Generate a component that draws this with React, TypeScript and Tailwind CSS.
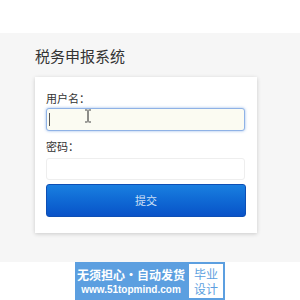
import React from 'react';

const font = { fontFamily: '"Noto Sans CJK SC", "Liberation Sans", sans-serif' };

export default function App() {
  return (
    <div className="w-[300px] h-[300px] bg-white overflow-hidden" style={font}>
      <div className="h-[33px] bg-white" />
      <div className="h-[229px] bg-[#f6f6f6] pl-[35px] pt-[12px]">
        <h1 className="text-[15px] leading-[22px] text-[#333]">税务申报系统</h1>
        <div className="relative mt-[10px] w-[222px] bg-white shadow-[0_1px_4px_rgba(0,0,0,0.18)] px-[11px] pt-[14px] pb-[16px]">
          <label className="block text-[11px] leading-[14px] text-[#333]">用户名：</label>
          <div className="relative mt-[3px] h-[23px] w-[199px] rounded-[3px] border border-[#8fb2e6] bg-[#fbfbf2] shadow-[0_0_3px_rgba(82,140,220,0.6)]">
            <span className="absolute left-[2px] top-[4px] h-[13px] w-px bg-[#555]" />
            <svg className="absolute left-[37px] top-[0px]" width="8" height="14" viewBox="0 0 8 14">
              <path d="M1 1h2.5M4.5 1H7M4 1.5v11M1 13h2.5M4.5 13H7" stroke="#444" strokeWidth="1.2" fill="none" />
            </svg>
          </div>
          <label className="block mt-[8px] text-[11px] leading-[14px] text-[#333]">密码：</label>
          <div className="mt-[5px] h-[22px] w-[199px] rounded-[3px] border border-[#eeeeee] bg-white" />
          <button className="mt-[4px] h-[33px] w-[200px] rounded-[3px] bg-gradient-to-b from-[#1a7fe0] to-[#0a52c8] border border-[#0d4fb5] text-[11px] text-[#cfe1f7]">
            提交
          </button>
        </div>
      </div>
      <div className="flex justify-center">
        <div className="flex h-[38px] w-[150px]">
          <div className="flex w-[112px] flex-col items-center justify-center bg-[#5c9fe0] text-white">
            <span className="text-[12px] leading-[17px] font-bold">无须担心·自动发货</span>
            <span className="text-[10px] leading-[13px] font-bold" style={{ fontFamily: '"Liberation Sans", sans-serif' }}>www.51topmind.com</span>
          </div>
          <div className="flex w-[38px] items-center justify-center border-2 border-[#5c9fe0] bg-white text-[#5c9fe0]">
            <p className="w-[25px] text-center text-[12px] leading-[15px] break-all">毕业设计</p>
          </div>
        </div>
      </div>
    </div>
  );
}
